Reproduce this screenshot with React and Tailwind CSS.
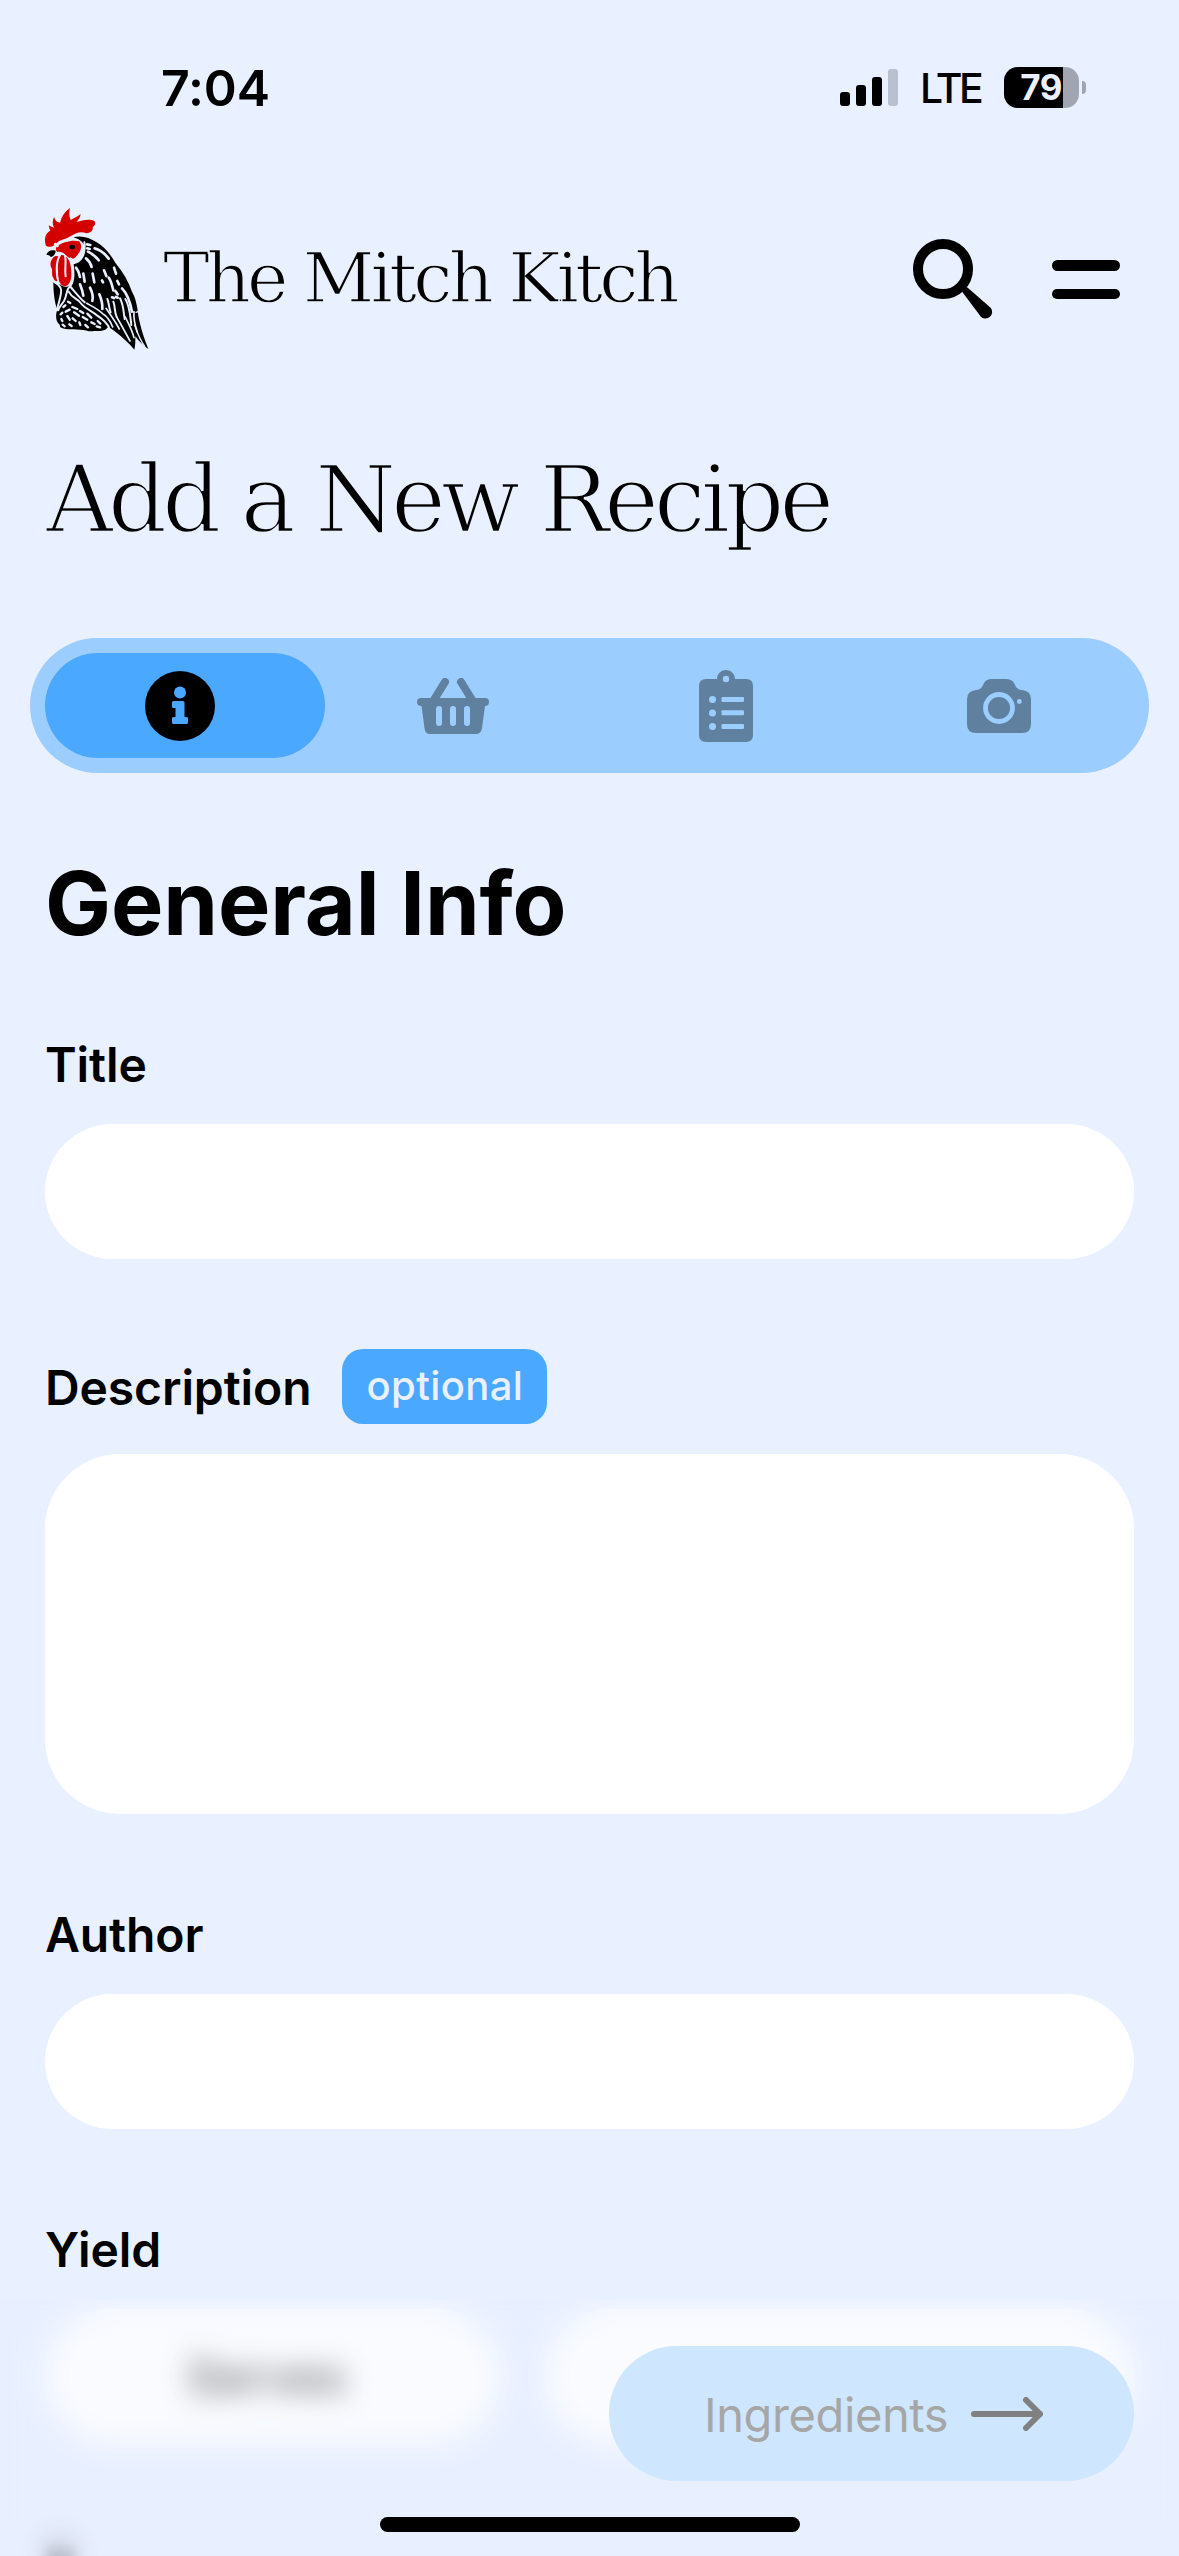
const PAGE_BG = "#e9f0ff";

function Rooster() {
  return (
    <svg viewBox="0 0 390 495" className="h-[165px] w-[130px] shrink-0" aria-label="Rooster logo">
      <g fill="#000">
        <path d="M130 127C155 120 178 128 200 142C225 157 243 180 257 205C280 232 296 262 306 290C317 308 322 335 325 362C332 400 343 430 355 462C340 452 326 438 316 424C316 440 316 452 313 464C298 446 278 428 258 412C250 406 240 396 232 398C228 408 205 408 192 408C178 412 168 404 150 404C125 403 100 404 90 396C92 388 84 388 80 376C77 364 78 354 82 344C74 325 70 290 70 262C76 270 84 270 90 268C98 278 116 278 126 266C132 248 130 226 128 208C150 206 168 186 166 158C160 142 148 132 130 127Z" />
        <path d="M49 179C54 168 62 163 77 167C77 177 70 185 62 186C60 181 56 180 49 179Z" />
      </g>
      <g fill="#d40000">
        <path d="M48 152C41 132 46 114 61 107C58 101 57 96 56 91C62 94 66 97 72 98C66 86 68 76 72 66C76 77 82 85 91 82C94 66 104 50 120 39C117 50 117 63 122 75C130 69 141 66 152 57C151 66 146 75 139 81C155 76 180 70 193 78C199 86 194 92 188 97C190 107 182 113 170 115C150 107 138 115 124 122C110 132 96 132 84 140C72 154 62 160 48 152Z" />
        <path d="M82 153C97 142 128 133 148 139C160 156 150 171 139 184C132 196 118 190 110 183C102 174 92 169 82 171C76 166 76 158 82 153Z" />
        <path d="M76 183C66 188 57 204 64 218C69 226 63 240 70 248C72 256 78 260 82 258C78 236 78 205 86 184Z" />
        <path d="M92 180C110 178 122 196 123 222C127 250 120 272 104 274C88 272 82 250 84 226C80 208 82 190 92 180Z" />
      </g>
      <ellipse cx="126" cy="156" rx="9" ry="6.5" />
      <g fill="none" stroke={PAGE_BG} strokeWidth="6" strokeLinecap="round" strokeLinejoin="round">
        <path d="M163 142C168 168 155 188 135 198C129 202 126 194 122 190" />
        <path d="M154 142C162 160 156 176 142 188" strokeWidth="4" />
        <path d="M92 177C80 195 78 225 83 252" />
        <path d="M105 183C110 200 103 220 107 244" />
        <path d="M76 148L82 152" strokeWidth="9" />
        <path d="M78 262C84 270 90 272 92 280C98 290 86 325 80 346" />
        <path d="M128 208C132 235 134 262 118 276C108 285 112 300 102 318C96 328 88 334 84 346" />
        <path d="M116 290C126 310 142 310 152 324C166 342 186 348 202 362C220 374 232 384 238 400" />
        <path d="M122 276C136 292 150 310 164 322" />
      </g>
      <g fill="none" stroke={PAGE_BG} strokeWidth="8" strokeLinecap="round">
        <path d="M171 148L181 150M172 160L179 162M194 160C210 164 224 175 236 191M174 170C186 176 198 185 206 196" />
        <path d="M168 190C176 196 182 206 185 216M138 218C144 225 148 235 150 246M160 236L164 260M188 236L193 262M150 268C154 278 158 290 160 302" />
        <path d="M222 226L229 243M252 218L258 236M236 248C243 256 246 270 250 286M262 258L267 268M216 256L219 262M180 278C186 290 190 306 187 318" />
        <path d="M256 288L263 298M246 307L252 309M258 306L263 308M276 280C292 296 300 318 306 350M208 298C214 312 218 324 217 342" />
        <path d="M232 312C238 325 236 338 242 352M250 320C256 334 252 346 260 366M270 310C280 328 280 348 284 372M286 312C300 334 300 360 304 390" strokeWidth="6" />
        <path d="M170 325C186 334 204 342 218 356C232 364 242 380 248 396M228 340C242 360 256 380 268 402M260 366C272 386 288 416 300 438M286 366C296 388 306 404 312 428M312 350C310 370 316 394 322 412" strokeWidth="5" />
        <path d="M318 352L324 350M314 390C322 414 334 440 344 454" strokeWidth="4" />
        <path d="M114 320L121 324M100 336L106 331M127 336L142 342M107 350L119 344M92 358L97 353M132 352L147 362M112 363L119 374M94 372L97 378M128 370L137 378M150 348L160 354M158 366L172 374M148 382L151 390M118 388L125 393M172 356L184 368M184 382L194 387M200 394L210 397M166 390L174 397M98 389L104 394M203 378L211 386" strokeWidth="7" />
      </g>
    </svg>
  );
}

function StatusBar() {
  return (
    <div className="flex h-[174px] items-start justify-between pl-[161px] pr-[93px]">
      <div className="mt-[58px] text-[50px] leading-[60px] font-semibold tracking-[-0.1px]">7:04</div>
      <div className="mt-[67px] flex h-[41px] items-center">
        <div className="flex h-[37px] items-end gap-[6px]">
          <span className="h-[14px] w-[10px] rounded-[3px] bg-black" />
          <span className="h-[21px] w-[10px] rounded-[3px] bg-black" />
          <span className="h-[29px] w-[10px] rounded-[3px] bg-black" />
          <span className="h-[37px] w-[10px] rounded-[3px] bg-[#b9c0cf]" />
        </div>
        <div className="mt-[2px] ml-[22px] w-[84px] text-[41px] leading-[41px] font-medium tracking-[-3.5px]">LTE</div>
        <div className="flex h-[41px] w-[75px] items-center overflow-hidden rounded-[14px] bg-[#a1a5b2]">
          <div className="flex h-full w-[59px] items-center justify-end bg-black pr-px text-[35px] leading-[41px] font-bold tracking-[-0.5px] text-[#e9f0ff]">
            79
          </div>
        </div>
        <span className="ml-[3px] h-[13px] w-[4px] rounded-r-full bg-[#a1a5b2]" />
      </div>
    </div>
  );
}

const slab =
  "font-['DejaVu_Serif',serif] whitespace-nowrap [-webkit-text-stroke-color:#e9f0ff]";

function Header() {
  return (
    <header className="flex h-[210px] items-start pl-[30px]">
      <div className="mt-[21px]">
        <Rooster />
      </div>
      <div className={`${slab} mt-[64px] ml-[3px] w-[740px] text-[70px] leading-[80px] tracking-[-3.9px] [-webkit-text-stroke-width:1.5px]`}>
        The Mitch Kitch
      </div>
      <svg viewBox="0 0 92 82" className="mt-[65px] h-[82px] w-[92px] shrink-0">
        <circle cx="40" cy="30" r="25" fill="none" stroke="#000" strokeWidth="10" />
        <path d="M65.6 49.6L87.9 69A6.7 6.7 0 0 1 78.1 78L60.4 54.4A3.5 3.5 0 0 1 65.6 49.6Z" fill="#000" />
      </svg>
      <div className="mt-[86px] ml-[57px] flex flex-col gap-[18px]">
        <span className="h-[10.5px] w-[68px] rounded-full bg-black" />
        <span className="h-[10.5px] w-[68px] rounded-full bg-black" />
      </div>
    </header>
  );
}

function InfoIcon() {
  return (
    <svg viewBox="0 0 70 70" className="h-[70px] w-[70px]">
      <circle cx="35" cy="35" r="35" fill="#000" />
      <g fill="#4ba8ff">
        <circle cx="35" cy="21.500" r="6" />
        <path d="M28 30H38Q39.500 30 39.500 31.500V46H41.500Q43 46 43 47.500V51.500Q43 53 41.500 53H28.500Q27 53 27 51.500V47.500Q27 46 28.500 46H30.500V37H28.500Q27 37 27 35.500V31.500Q27 30 28.500 30Z" />
      </g>
    </svg>
  );
}

function BasketIcon() {
  return (
    <svg viewBox="0 0 72 56" className="h-[56px] w-[72px]">
      <path d="M28 4L15 25M44 4L57 25" stroke="#6080a0" strokeWidth="8" strokeLinecap="round" />
      <path d="M4 20H68Q72 20 72 24Q72 28 68 28L65 50Q64 56 59 56H13Q8 56 7.500 50L4.500 28Q0 28 0 24Q0 20 4 20Z" fill="#6080a0" />
      <path d="M22 31V45M36 31V45M50 31V45" stroke="#9bcdff" strokeWidth="6" strokeLinecap="round" />
    </svg>
  );
}

function ClipboardIcon() {
  return (
    <svg viewBox="0 0 54 72" className="h-[72px] w-[54px]">
      <path d="M7 9H18C18 4 22 0 27 0S36 4 36 9H47Q54 9 54 16V65Q54 72 47 72H7Q0 72 0 65V16Q0 9 7 9Z" fill="#6080a0" />
      <g fill="#9bcdff">
        <circle cx="27" cy="9" r="3.200" />
        <circle cx="13.500" cy="29.500" r="3.500" />
        <circle cx="13.500" cy="43" r="3.500" />
        <circle cx="13.500" cy="56.500" r="3.500" />
        <rect x="22.500" y="27" width="22.500" height="5" rx="1" />
        <rect x="22.500" y="40.300" width="22.500" height="5" rx="1" />
        <rect x="22.500" y="54" width="22.500" height="5" rx="1" />
      </g>
    </svg>
  );
}

function CameraIcon() {
  return (
    <svg viewBox="0 0 64 54" className="h-[54px] w-[64px]">
      <path d="M9 11C14 11 15 8 17 4C19 1 21 0 25 0H39C43 0 45 1 47 4C49 8 50 11 55 11Q64 12 64 20V45Q64 54 55 54H9Q0 54 0 45V20Q0 12 9 11Z" fill="#6080a0" />
      <circle cx="32" cy="29" r="13.500" fill="none" stroke="#9bcdff" strokeWidth="4.800" />
      <circle cx="52.300" cy="22.500" r="2.400" fill="#9bcdff" />
    </svg>
  );
}

function Tabs() {
  return (
    <nav className="mx-[30px] h-[135px] rounded-full bg-[#9bcdff] p-[15px]">
      <div className="grid h-[105px] grid-cols-4">
        <div className="flex w-[280px] items-center rounded-full bg-[#4ba8ff] pl-[100px]">
          <InfoIcon />
        </div>
        <div className="flex items-center justify-center"><BasketIcon /></div>
        <div className="flex items-center justify-center"><ClipboardIcon /></div>
        <div className="flex items-center justify-center pl-[3px]"><CameraIcon /></div>
      </div>
    </nav>
  );
}

function Label({ children }) {
  return <div className="h-[60px] text-[48px] leading-[62px] font-semibold tracking-[-0.1px]">{children}</div>;
}

export default function App() {
  return (
    <div className="relative h-[2556px] w-[1179px] overflow-hidden bg-[#e9f0ff] font-['Inter',sans-serif] text-black">
      <StatusBar />
      <Header />
      <h1 className={`${slab} -mt-px ml-[46px] h-[255px] pt-[63px] text-[93px] leading-[108px] font-normal tracking-[-5.300px] [-webkit-text-stroke-width:2.300px]`}>
        Add a New Recipe
      </h1>
      <Tabs />
      <main className="px-[45px]">
        <h2 className="mt-[76px] text-[88px] leading-[108px] font-bold tracking-[-0.1px]">General Info</h2>
        <div className="mt-[77px]"><Label>Title</Label></div>
        <div className="mt-[30px] h-[135px] rounded-full bg-white" />
        <div className="mt-[90px] flex h-[75px] items-center gap-[31px]">
          <Label>Description</Label>
          <span className="flex h-[75px] w-[205px] items-center justify-center rounded-[21px] bg-[#4ba8ff] pb-px text-[40px] font-medium tracking-[0.4px] text-[#e9f0ff]">
            optional
          </span>
        </div>
        <div className="mt-[30px] h-[360px] rounded-[75px] bg-white" />
        <div className="mt-[90px]"><Label>Author</Label></div>
        <div className="mt-[30px] h-[135px] rounded-full bg-white" />
        <div className="mt-[90px]"><Label>Yield</Label></div>
        <div className="mt-[30px] flex h-[135px] gap-[45px]">
          <div className="flex w-[455px] items-center justify-center rounded-full bg-white pr-[12px] text-[48px] font-medium text-[#444]">Serves</div>
          <div className="flex-1 rounded-full bg-white" />
        </div>
        <div className="mt-[87px] w-[40px] opacity-70 blur-[7px]"><Label>P</Label></div>
      </main>
      <footer className="absolute inset-x-0 bottom-0 flex h-[256px] flex-col items-end bg-[#e9f0ff]/25 px-[45px] pt-[46px] backdrop-blur-[14px]">
        <button className="flex h-[135px] w-[525px] items-center rounded-full bg-[#cfe6ff] pl-[95px] text-left text-[47px] text-[#a6a6a6]">
          <span className="mt-[3px] w-[267px] tracking-[-0.4px]">Ingredients</span>
          <svg viewBox="0 0 72 34" className="h-[34px] w-[72px]" fill="none" stroke="#808080" strokeWidth="6" strokeLinecap="round" strokeLinejoin="round">
            <path d="M3 17H69M55 3L69 17L55 31" />
          </svg>
        </button>
        <div className="mt-[36px] h-[15px] w-[420px] self-center rounded-full bg-black" />
      </footer>
    </div>
  );
}
